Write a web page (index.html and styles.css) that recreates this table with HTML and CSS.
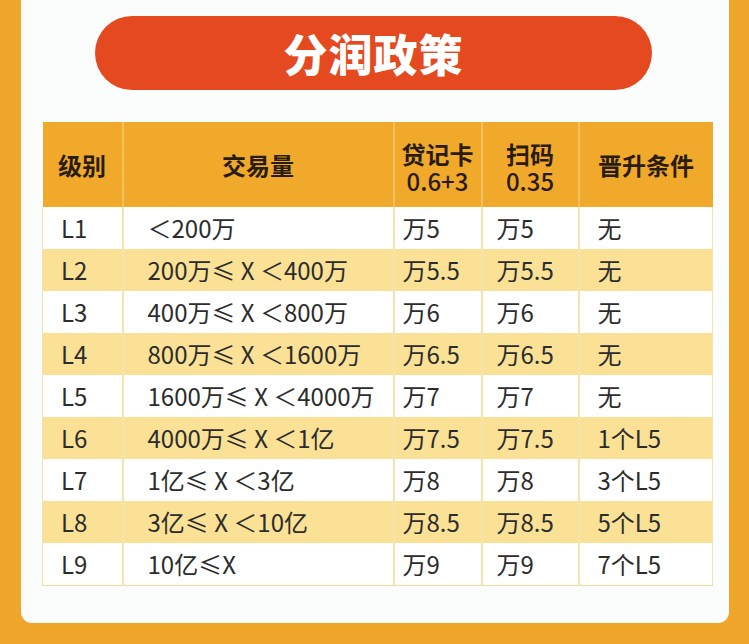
FILE: index.html
```html
<!DOCTYPE html>
<html lang="zh-CN">
<head>
<meta charset="utf-8">
<title>分润政策</title>
<link rel="stylesheet" href="styles.css">
</head>
<body>
<div class="panel">
  <div class="pill">分润政策</div>
  <table class="policy">
    <colgroup>
      <col class="c1"><col class="c2"><col class="c3"><col class="c4"><col class="c5">
    </colgroup>
    <thead>
      <tr>
        <th>级别</th>
        <th>交易量</th>
        <th class="two"><span class="hl">贷记卡</span><span class="num">0.6+3</span></th>
        <th class="two"><span class="hl">扫码</span><span class="num">0.35</span></th>
        <th>晋升条件</th>
      </tr>
    </thead>
    <tbody>
      <tr><td class="lv">L1</td><td class="vol">＜200万</td><td class="a">万5</td><td class="b">万5</td><td class="c">无</td></tr>
      <tr class="alt"><td class="lv">L2</td><td class="vol">200万≤ X ＜400万</td><td class="a">万5.5</td><td class="b">万5.5</td><td class="c">无</td></tr>
      <tr><td class="lv">L3</td><td class="vol">400万≤ X ＜800万</td><td class="a">万6</td><td class="b">万6</td><td class="c">无</td></tr>
      <tr class="alt"><td class="lv">L4</td><td class="vol">800万≤ X ＜1600万</td><td class="a">万6.5</td><td class="b">万6.5</td><td class="c">无</td></tr>
      <tr><td class="lv">L5</td><td class="vol">1600万≤ X ＜4000万</td><td class="a">万7</td><td class="b">万7</td><td class="c">无</td></tr>
      <tr class="alt"><td class="lv">L6</td><td class="vol">4000万≤ X ＜1亿</td><td class="a">万7.5</td><td class="b">万7.5</td><td class="c">1个L5</td></tr>
      <tr><td class="lv">L7</td><td class="vol">1亿≤ X ＜3亿</td><td class="a">万8</td><td class="b">万8</td><td class="c">3个L5</td></tr>
      <tr class="alt"><td class="lv">L8</td><td class="vol">3亿≤ X ＜10亿</td><td class="a">万8.5</td><td class="b">万8.5</td><td class="c">5个L5</td></tr>
      <tr><td class="lv">L9</td><td class="vol">10亿≤X</td><td class="a">万9</td><td class="b">万9</td><td class="c">7个L5</td></tr>
    </tbody>
  </table>
</div>
</body>
</html>
```
FILE: styles.css
```css
html, body {
  margin: 0;
  padding: 0;
}
body {
  background: #f0a62a;
  height: 644px;
  overflow: hidden;
  font-family: "Noto Sans CJK SC", "Noto Sans", sans-serif;
}
.panel {
  margin: 0 20px 0 21px;
  height: 623px;
  box-sizing: border-box;
  padding-top: 16px;
  background: #fbfdfd;
  border-radius: 0 0 11px 11px;
}
.pill {
  margin-left: 74px;
  width: 557px;
  height: 74px;
  border-radius: 37px;
  background: #e5491f;
  color: #ffffff;
  font-size: 44px;
  font-weight: 900;
  line-height: 74px;
  text-align: center;
  letter-spacing: 1px;
}
.policy {
  margin: 32px 0 0 21px;
  width: 670px;
  border-collapse: collapse;
  table-layout: fixed;
  color: #2c2c2c;
  font-size: 24px;
}
.c1 { width: 80px; }
.c2 { width: 271px; }
.c3 { width: 88px; }
.c4 { width: 97px; }
.c5 { width: 134px; }
.policy th {
  background: #f0a92b;
  height: 85px;
  padding: 0;
  font-size: 24px;
  font-weight: 700;
  line-height: 28px;
  color: #2a1c0c;
  text-align: center;
  border-left: 2px solid #f4c25c;
}
.policy th.two { padding-top: 6px; box-sizing: border-box; }
.policy th:first-child { border-left: none; }
.hl, .num {
  display: block;
}
.hl { line-height: 27px; }
.num {
  font-weight: 500;
  line-height: 28px;
  font-size: 24px;
}
.policy td {
  height: 42px;
  padding: 0;
  line-height: 42px;
  white-space: nowrap;
  border-left: 2px solid #f3e4ae;
  background: #ffffff;
}
.policy tr.alt td { background: #fae196; }
.policy td:first-child { border-left: 1px solid #f3e4ae; }
.policy td:last-child { border-right: 1px solid #f3e4ae; }
.policy tbody tr:last-child td { border-bottom: 1px solid #f0dc9c; }
.lv { padding-left: 18px !important; }
.vol { padding-left: 24px !important; }
.a { padding-left: 8px !important; }
.b { padding-left: 14px !important; }
.c { padding-left: 18px !important; }
```
